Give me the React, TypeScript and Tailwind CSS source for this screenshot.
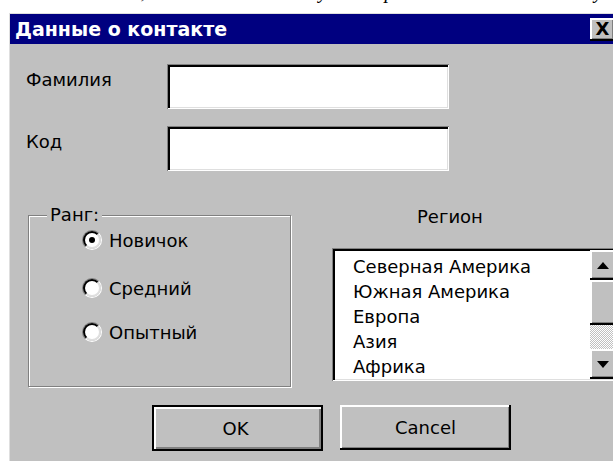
import { type ReactNode } from 'react';

const REGIONS = ['Северная Америка', 'Южная Америка', 'Европа', 'Азия', 'Африка'];

const RANKS = [
  { label: 'Новичок', checked: true, gap: 'mt-0' },
  { label: 'Средний', checked: false, gap: 'mt-[26px]' },
  { label: 'Опытный', checked: false, gap: 'mt-[22px]' },
];

// sunken 3d edge used by edit boxes and the list box
const sunken =
  'bg-white shadow-[inset_1px_1px_0_#808080,inset_-1px_-1px_0_#fff,inset_3px_3px_0_#000,inset_-2px_-2px_0_#dfdfdf]';

const raised =
  'bg-[#c0c0c0] shadow-[inset_-2px_-2px_0_#000,inset_2px_2px_0_#fff,inset_-3px_-3px_0_#808080]';

function TextBox() {
  return <div className={`h-[45px] w-[282px] ${sunken}`} />;
}

function Radio({ checked, children }: { checked: boolean; children: ReactNode }) {
  return (
    <div className="flex h-[22px] items-center">
      <span className="flex h-[20px] w-[20px] items-center justify-center rounded-full border-[1.5px] border-t-[#808080] border-r-white border-b-white border-l-[#808080]">
        <span className="flex h-full w-full items-center justify-center rounded-full border-2 border-t-black border-r-[#dfdfdf] border-b-[#dfdfdf] border-l-black bg-white">
          {checked && <span className="h-[6px] w-[6px] rounded-full bg-black" />}
        </span>
      </span>
      <span className="ml-[7px]">{children}</span>
    </div>
  );
}

function Arrow({ up }: { up?: boolean }) {
  return (
    <svg width="12" height="7" viewBox="0 0 12 7">
      <polygon points={up ? '6,0 12,7 0,7' : '0,0 12,0 6,7'} fill="#000" />
    </svg>
  );
}

function ScrollBar() {
  return (
    <div className="flex w-[26px] flex-col">
      <div className={`flex h-[30px] items-center justify-center ${raised}`}>
        <Arrow up />
      </div>
      <div className={`h-[45px] ${raised}`} />
      <div className="flex-1 bg-[repeating-conic-gradient(#fff_0_25%,#c0c0c0_0_50%)] bg-[length:2px_2px]" />
      <div className={`flex h-[30px] items-center justify-center ${raised}`}>
        <Arrow />
      </div>
    </div>
  );
}

export default function App() {
  return (
    <div className="h-[461px] w-[613px] overflow-hidden bg-white font-['DejaVu_Sans',sans-serif] text-[18px] text-black">
      {/* tail of the printed line above the dialog */}
      <div className="h-[13px] overflow-hidden">
        <p className="-mt-[20px] whitespace-nowrap pl-[8px] font-['Liberation_Serif',serif] text-[20px] leading-[22px] italic">
          окно имеет вид, и все его элементы уже и приняли места на панели у
        </p>
      </div>

      <div className="ml-[9px] h-[448px] w-[608px] border-t border-l border-[#dfdfdf] bg-[#c0c0c0]">
        <div className="flex h-[30px] items-center justify-between bg-[#000080] pl-[5px] pr-[2px]">
          <span className="text-[19px] leading-none font-bold text-white">Данные о контакте</span>
          <span
            className={`flex h-[23px] w-[25px] items-center justify-center text-[18px] leading-none font-bold ${raised}`}
          >
            X
          </span>
        </div>

        <div className="flex pt-[20px] pl-[16px]">
          <div className="w-[141px] pt-[5px] leading-[22px]">Фамилия</div>
          <TextBox />
        </div>
        <div className="mt-[17px] flex pl-[16px]">
          <div className="w-[141px] pt-[5px] leading-[22px]">Код</div>
          <TextBox />
        </div>

        <div className="mt-[33px] flex">
          <fieldset className="ml-[18px] h-[183px] w-[263px] border border-[#808080] px-[18px] shadow-[inset_1px_1px_0_#fff,1px_1px_0_#fff]">
            <legend className="bg-[#c0c0c0] px-[3px] leading-[22px]">Ранг:</legend>
            <div className="mt-[3px] pl-[35px]">
              {RANKS.map((r) => (
                <div key={r.label} className={r.gap}>
                  <Radio checked={r.checked}>{r.label}</Radio>
                </div>
              ))}
            </div>
          </fieldset>

          <div className="ml-[41px] flex flex-col pt-[2px]">
            <div className="pl-[85px] leading-[22px]">Регион</div>
            <div className={`mt-[20px] flex h-[133px] w-[285px] p-[2px] pr-[1px] ${sunken}`}>
              <ul className="flex-1 overflow-hidden pt-[4px] pl-[19px] leading-[25px]">
                {REGIONS.map((r) => (
                  <li key={r}>{r}</li>
                ))}
              </ul>
              <ScrollBar />
            </div>
          </div>
        </div>

        <div className="mt-[18px] flex gap-[17px] pl-[142px]">
          <button className="flex h-[46px] w-[171px] items-center justify-center border-2 border-black bg-[#c0c0c0] pr-[4px] shadow-[inset_2px_2px_0_#fff,inset_-2px_-2px_0_#808080]">
            OK
          </button>
          <button className={`flex h-[45px] w-[171px] items-center justify-center ${raised}`}>Cancel</button>
        </div>
      </div>
    </div>
  );
}
